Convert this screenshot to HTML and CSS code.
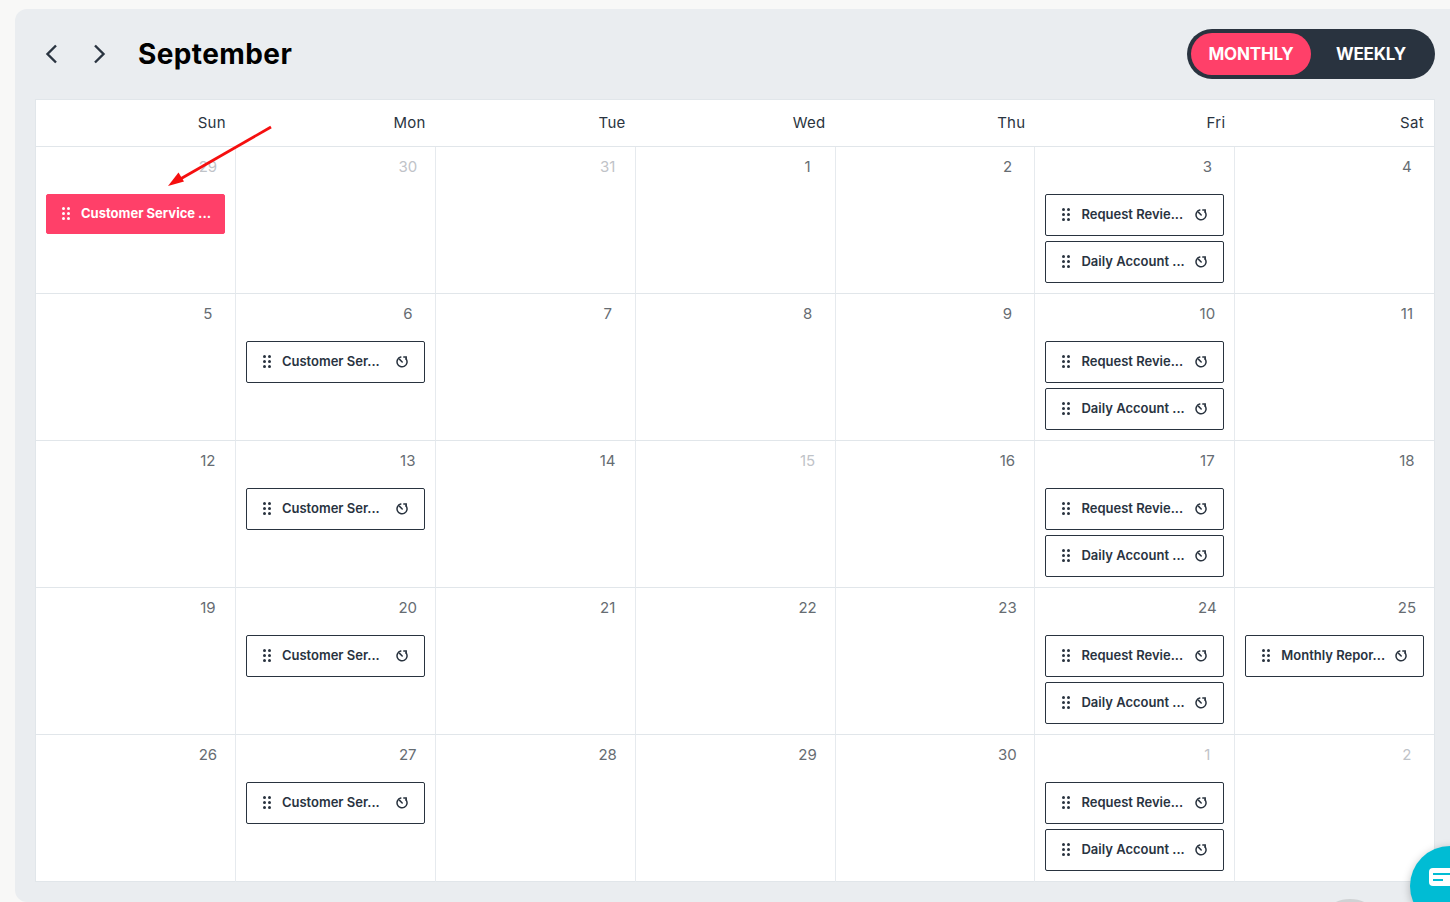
FILE: index.html
```html
<!DOCTYPE html>
<html lang="en">
<head>
<meta charset="utf-8">
<title>Calendar</title>
<link rel="stylesheet" href="styles.css">
</head>
<body>
<svg width="0" height="0" class="defs">
  <defs>
    <symbol id="drag" viewBox="0 0 8 13"><g fill="currentColor"><circle cx="1.5" cy="1.5" r="1.5"/><circle cx="6.5" cy="1.5" r="1.5"/><circle cx="1.5" cy="6.5" r="1.5"/><circle cx="6.5" cy="6.5" r="1.5"/><circle cx="1.5" cy="11.5" r="1.5"/><circle cx="6.5" cy="11.5" r="1.5"/></g></symbol>
    <symbol id="clock" viewBox="0 0 12 12"><g fill="none" stroke="currentColor" stroke-width="1.5" stroke-linecap="round"><path d="M4.800 1A5 5 0 1 0 10 2.800"/><path d="M3.600 3.400 6.200 6"/><path d="M7.800 .9h2.400v2.400"/></g></symbol>
  </defs>
</svg>
<main class="panel">
  <header class="toolbar">
    <button class="nav" aria-label="Previous"><svg width="14" height="20" viewBox="0 0 14 20"><path d="M11 1.500 2.500 10l8.500 8.500" fill="none" stroke="currentColor" stroke-width="2.400"/></svg></button>
    <button class="nav" aria-label="Next"><svg width="14" height="20" viewBox="0 0 14 20"><path d="M3 1.500 11.500 10 3 18.500" fill="none" stroke="currentColor" stroke-width="2.400"/></svg></button>
    <h1 class="title">September</h1>
    <div class="toggle"><span class="tab active">MONTHLY</span><span class="tab">WEEKLY</span></div>
  </header>
  <section class="calendar">
    <div class="head">Sun</div><div class="head">Mon</div><div class="head">Tue</div><div class="head">Wed</div><div class="head">Thu</div><div class="head">Fri</div><div class="head">Sat</div>

    <div class="cell"><span class="num muted">29</span><div class="event hot"><svg class="drag"><use href="#drag"/></svg><span class="label">Customer Service ...</span></div></div>
    <div class="cell"><span class="num muted">30</span></div>
    <div class="cell"><span class="num muted">31</span></div>
    <div class="cell"><span class="num">1</span></div>
    <div class="cell"><span class="num">2</span></div>
    <div class="cell"><span class="num">3</span><div class="event"><svg class="drag"><use href="#drag"/></svg><span class="label">Request Revie...</span><svg class="clock"><use href="#clock"/></svg></div><div class="event"><svg class="drag"><use href="#drag"/></svg><span class="label">Daily Account ...</span><svg class="clock"><use href="#clock"/></svg></div></div>
    <div class="cell"><span class="num">4</span></div>

    <div class="cell"><span class="num">5</span></div>
    <div class="cell"><span class="num">6</span><div class="event"><svg class="drag"><use href="#drag"/></svg><span class="label">Customer Ser...</span><svg class="clock"><use href="#clock"/></svg></div></div>
    <div class="cell"><span class="num">7</span></div>
    <div class="cell"><span class="num">8</span></div>
    <div class="cell"><span class="num">9</span></div>
    <div class="cell"><span class="num">10</span><div class="event"><svg class="drag"><use href="#drag"/></svg><span class="label">Request Revie...</span><svg class="clock"><use href="#clock"/></svg></div><div class="event"><svg class="drag"><use href="#drag"/></svg><span class="label">Daily Account ...</span><svg class="clock"><use href="#clock"/></svg></div></div>
    <div class="cell"><span class="num">11</span></div>

    <div class="cell"><span class="num">12</span></div>
    <div class="cell"><span class="num">13</span><div class="event"><svg class="drag"><use href="#drag"/></svg><span class="label">Customer Ser...</span><svg class="clock"><use href="#clock"/></svg></div></div>
    <div class="cell"><span class="num">14</span></div>
    <div class="cell"><span class="num muted">15</span></div>
    <div class="cell"><span class="num">16</span></div>
    <div class="cell"><span class="num">17</span><div class="event"><svg class="drag"><use href="#drag"/></svg><span class="label">Request Revie...</span><svg class="clock"><use href="#clock"/></svg></div><div class="event"><svg class="drag"><use href="#drag"/></svg><span class="label">Daily Account ...</span><svg class="clock"><use href="#clock"/></svg></div></div>
    <div class="cell"><span class="num">18</span></div>

    <div class="cell"><span class="num">19</span></div>
    <div class="cell"><span class="num">20</span><div class="event"><svg class="drag"><use href="#drag"/></svg><span class="label">Customer Ser...</span><svg class="clock"><use href="#clock"/></svg></div></div>
    <div class="cell"><span class="num">21</span></div>
    <div class="cell"><span class="num">22</span></div>
    <div class="cell"><span class="num">23</span></div>
    <div class="cell"><span class="num">24</span><div class="event"><svg class="drag"><use href="#drag"/></svg><span class="label">Request Revie...</span><svg class="clock"><use href="#clock"/></svg></div><div class="event"><svg class="drag"><use href="#drag"/></svg><span class="label">Daily Account ...</span><svg class="clock"><use href="#clock"/></svg></div></div>
    <div class="cell"><span class="num">25</span><div class="event"><svg class="drag"><use href="#drag"/></svg><span class="label">Monthly Repor...</span><svg class="clock"><use href="#clock"/></svg></div></div>

    <div class="cell"><span class="num">26</span></div>
    <div class="cell"><span class="num">27</span><div class="event"><svg class="drag"><use href="#drag"/></svg><span class="label">Customer Ser...</span><svg class="clock"><use href="#clock"/></svg></div></div>
    <div class="cell"><span class="num">28</span></div>
    <div class="cell"><span class="num">29</span></div>
    <div class="cell"><span class="num">30</span></div>
    <div class="cell"><span class="num muted">1</span><div class="event"><svg class="drag"><use href="#drag"/></svg><span class="label">Request Revie...</span><svg class="clock"><use href="#clock"/></svg></div><div class="event"><svg class="drag"><use href="#drag"/></svg><span class="label">Daily Account ...</span><svg class="clock"><use href="#clock"/></svg></div></div>
    <div class="cell"><span class="num muted">2</span></div>
  </section>
</main>
<svg class="arrow" width="120" height="70" viewBox="0 0 120 70"><path d="M111 7 16 61.500" fill="none" stroke="#f50f0f" stroke-width="2.800"/><path d="M8 66 18.500 52.500 24 61.500Z" fill="#f50f0f"/></svg>
<div class="chat"><svg width="40" height="20" viewBox="0 0 40 20"><rect width="40" height="18" rx="4" fill="#fff"/><path d="M4 6h30M4 12h10" stroke="#00bcd4" stroke-width="2"/></svg></div>
<div class="peek"></div>
</body>
</html>
```
FILE: styles.css
```css
* { box-sizing: border-box; }
html, body { margin: 0; height: 100%; overflow: hidden; }
body {
  background: #f8f8f7;
  font-family: Inter, "Liberation Sans", sans-serif;
  color: #2a3440;
  padding: 9px 0 0 15px;
  position: relative;
}
.defs { position: absolute; }
.panel {
  width: 1480px;
  height: 893px;
  background: #eaedf0;
  border-radius: 12px 0 0 12px;
  padding: 20px 0 0 20px;
}
.toolbar {
  display: flex;
  align-items: center;
  width: 1400px;
  height: 50px;
  margin-bottom: 20px;
}
.nav {
  border: 0;
  background: none;
  padding: 0;
  color: #2a3440;
  width: 14px;
  height: 20px;
  margin: 0 33px 0 10px;
  display: block;
}
.nav + .nav { margin: 0 31px 0 0; }
.title {
  font-size: 28px;
  font-weight: 700;
  color: #000;
  margin: 0 0 1px 1px;
  letter-spacing: 0.4px;
  flex: 1;
}
.toggle {
  display: flex;
  align-items: center;
  width: 248px;
  height: 50px;
  border-radius: 25px;
  padding: 4px;
  background: #29333f;
}
.tab {
  width: 120px;
  height: 42px;
  border-radius: 21px;
  display: flex;
  align-items: center;
  justify-content: center;
  color: #fff;
  font-size: 17px;
  font-weight: 700;
  letter-spacing: -0.2px;
}
.tab.active { background: #ff4069; }
.calendar {
  display: grid;
  grid-template-columns: repeat(6, 199.900px) 198.600px;
  grid-template-rows: 47px repeat(5, 147px);
  width: 1400px;
  height: 783px;
  background: #fff;
  border: 1px solid #e1e6ea;
}
.head {
  font-size: 15px;
  letter-spacing: 0.3px;
  line-height: 46px;
  text-align: right;
  padding-right: 10px;
  border-bottom: 1px solid #e1e6ea;
}
.cell {
  border-right: 1px solid #e6eaee;
  border-bottom: 1px solid #e1e6ea;
  padding: 10px 10px 0;
  display: flex;
  flex-direction: column;
  gap: 5px;
  align-items: stretch;
}
.cell:nth-child(7n) { border-right: 0; }
.cell:nth-last-child(-n+7) { border-bottom: 0; }
.num {
  display: block;
  align-self: flex-end;
  width: 34px;
  height: 32px;
  line-height: 20px;
  text-align: center;
  font-size: 15px;
  color: #666c72;
}
.num.muted { color: #bfc3c8; }
.event {
  display: flex;
  align-items: center;
  height: 42px;
  flex: none;
  padding: 0 16px 1px 15px;
  border: 1px solid #29333f;
  border-radius: 2px;
  font-size: 13px;
  font-weight: 600;
  color: #29333f;
  background: #fff;
}
.label { flex: 1; white-space: nowrap; overflow: hidden; margin-bottom: 1px; }
.drag { width: 8px; height: 13px; margin: 0 11px 0 1px; flex: none; }
.clock { width: 12px; height: 12px; flex: none; }
.event.hot {
  background: #ff4069;
  border-color: #ff4069;
  height: 40px;
  color: #fff;
  font-weight: 700;
  padding-right: 8px;
  padding-left: 14px;
}
.arrow { position: absolute; left: 160px; top: 120px; }
.chat {
  position: absolute;
  left: 1410px;
  top: 846px;
  width: 80px;
  height: 80px;
  border-radius: 50%;
  background: #00bcd4;
  box-shadow: 0 2px 8px rgba(0, 0, 0, .25);
  padding: 22px 0 0 19px;
}
.chat svg { display: block; }
.peek {
  position: absolute;
  left: 1330px;
  top: 899px;
  width: 40px;
  height: 20px;
  border-radius: 50%;
  background: #cfd2d4;
}
```
